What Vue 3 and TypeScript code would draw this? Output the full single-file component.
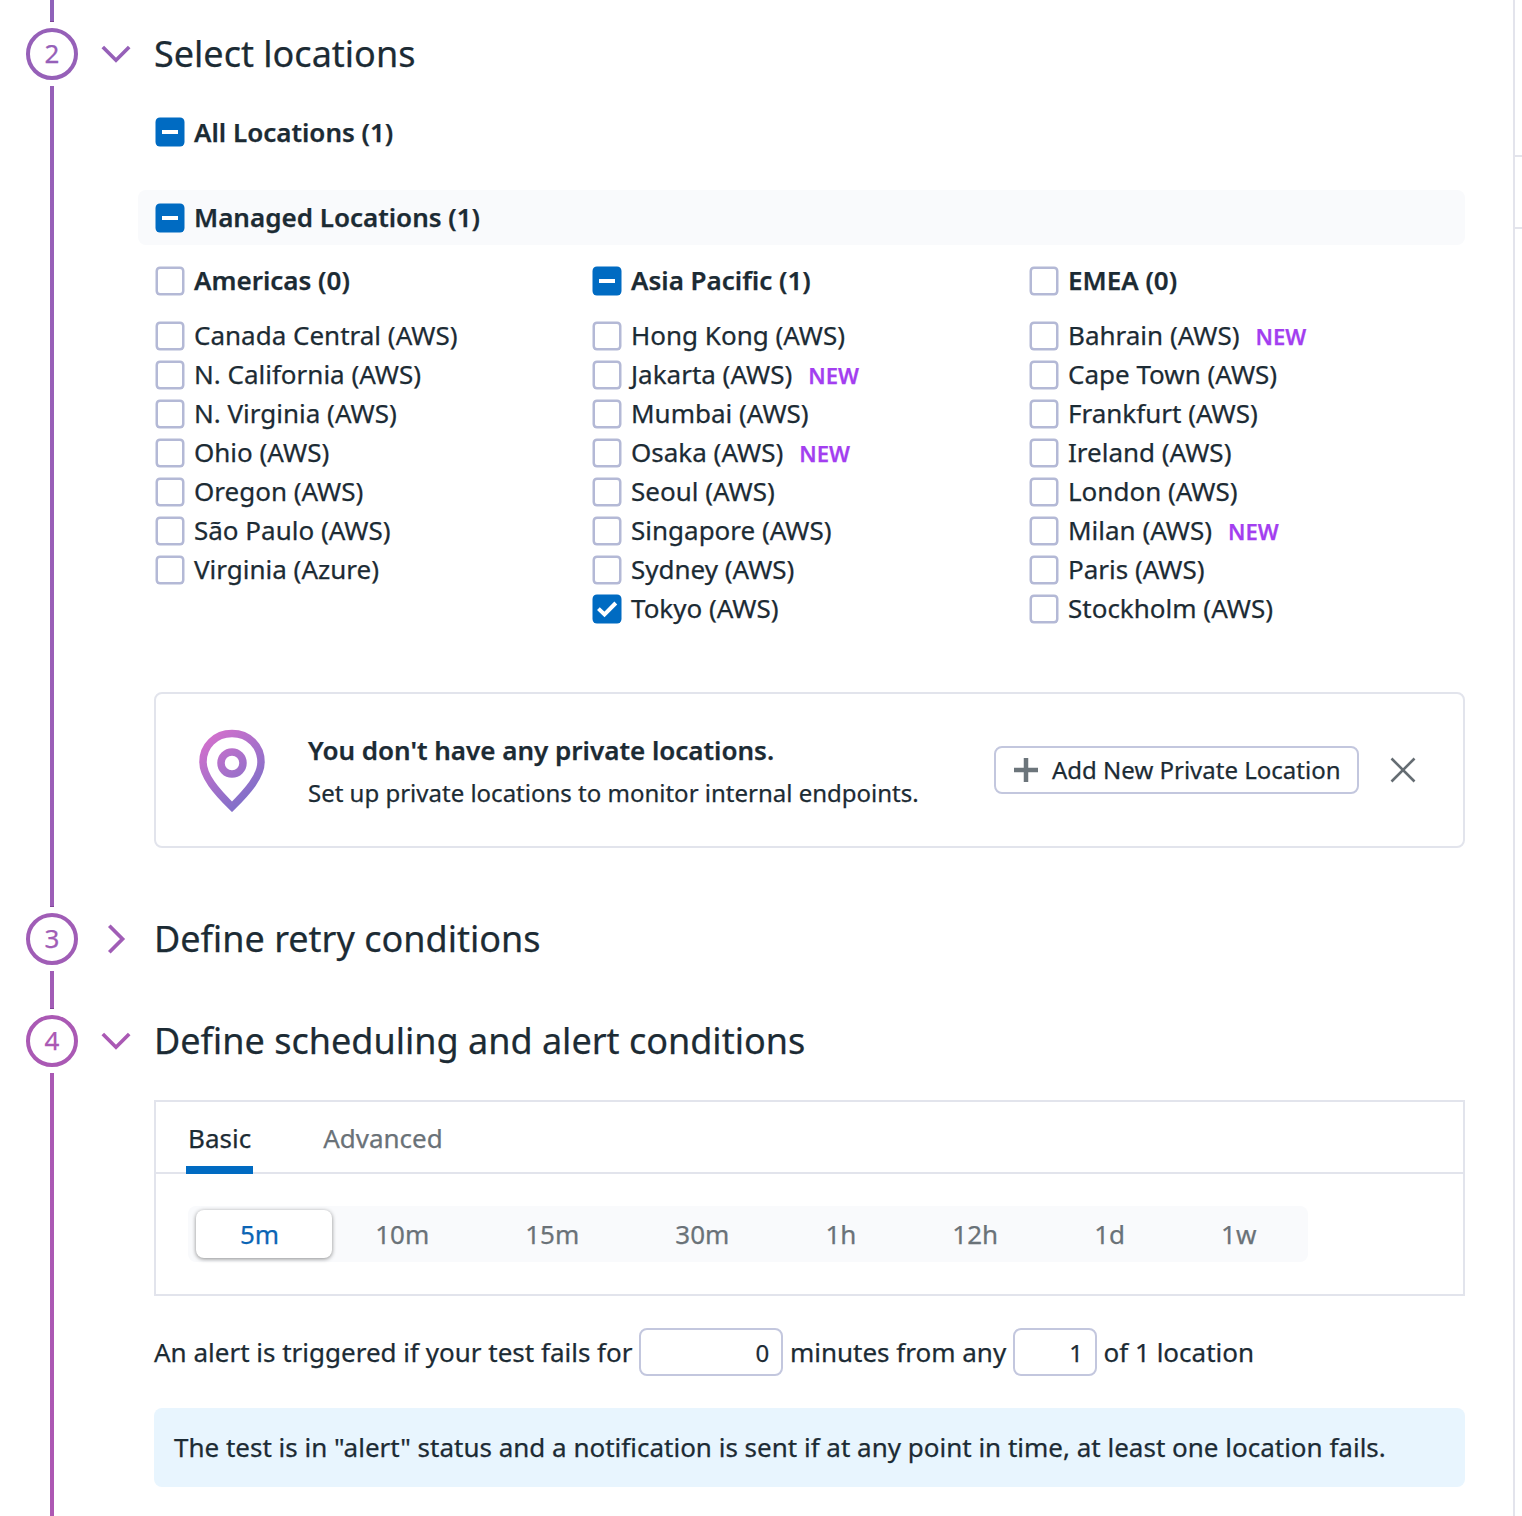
<script setup lang="ts">
type CheckState = 'off' | 'mixed' | 'on'

interface Location {
  name: string
  state?: CheckState
  isNew?: boolean
}

interface Region {
  name: string
  state: CheckState
  locations: Location[]
}

const regions: Region[] = [
  {
    name: 'Americas (0)',
    state: 'off',
    locations: [
      { name: 'Canada Central (AWS)' },
      { name: 'N. California (AWS)' },
      { name: 'N. Virginia (AWS)' },
      { name: 'Ohio (AWS)' },
      { name: 'Oregon (AWS)' },
      { name: 'São Paulo (AWS)' },
      { name: 'Virginia (Azure)' },
    ],
  },
  {
    name: 'Asia Pacific (1)',
    state: 'mixed',
    locations: [
      { name: 'Hong Kong (AWS)' },
      { name: 'Jakarta (AWS)', isNew: true },
      { name: 'Mumbai (AWS)' },
      { name: 'Osaka (AWS)', isNew: true },
      { name: 'Seoul (AWS)' },
      { name: 'Singapore (AWS)' },
      { name: 'Sydney (AWS)' },
      { name: 'Tokyo (AWS)', state: 'on' },
    ],
  },
  {
    name: 'EMEA (0)',
    state: 'off',
    locations: [
      { name: 'Bahrain (AWS)', isNew: true },
      { name: 'Cape Town (AWS)' },
      { name: 'Frankfurt (AWS)' },
      { name: 'Ireland (AWS)' },
      { name: 'London (AWS)' },
      { name: 'Milan (AWS)', isNew: true },
      { name: 'Paris (AWS)' },
      { name: 'Stockholm (AWS)' },
    ],
  },
]

const intervals: string[] = ['5m', '10m', '15m', '30m', '1h', '12h', '1d', '1w']
const selectedInterval = '5m'
</script>

<template>
  <div class="page">
    <main class="main">
      <div class="stub"><span class="line capped"></span></div>

      <section class="step step-2">
        <div class="rail">
          <span class="badge">2</span>
          <span class="line capped"></span>
        </div>
        <div class="toggle">
          <svg width="30" height="30" viewBox="0 0 30 30"><path d="M1.8 8 15 21.2 28.2 8" /></svg>
        </div>
        <div class="body">
          <h2>Select locations</h2>

          <div class="check strong all">
            <span class="box mixed"></span><span>All Locations (1)</span>
          </div>
          <div class="check strong managed">
            <span class="box mixed"></span><span class="label">Managed Locations (1)</span>
          </div>

          <div class="regions">
            <div v-for="region in regions" :key="region.name" class="region">
              <div class="check strong region-head">
                <span class="box" :class="region.state"></span><span class="label">{{ region.name }}</span>
              </div>
              <div v-for="loc in region.locations" :key="loc.name" class="check">
                <span class="box" :class="loc.state ?? 'off'">
                  <svg v-if="loc.state === 'on'" width="28" height="28" viewBox="0 0 28 28">
                    <path d="M5.4 13.600 11.500 19.400 22.800 8" />
                  </svg>
                </span>
                <span class="label">{{ loc.name }}</span>
                <span v-if="loc.isNew" class="new">NEW</span>
              </div>
            </div>
          </div>

          <div class="private">
            <svg class="pin" width="66" height="83" viewBox="0 -0.500 66 83">
              <defs>
                <linearGradient id="pin-fill" gradientUnits="userSpaceOnUse" x1="8" y1="8" x2="54" y2="62">
                  <stop offset="0" stop-color="#d270cc" />
                  <stop offset="1" stop-color="#8470c9" />
                </linearGradient>
              </defs>
              <path d="M33 4.1C16 4.1 4 16.8 4 32.5 4 46.500 17 61.500 33 77.300 49 61.500 62 46.500 62 32.500 62 16.800 50 4.100 33 4.100Z" />
              <circle cx="33" cy="33.500" r="11" />
            </svg>
            <div class="private-text">
              <strong>You don't have any private locations.</strong>
              <span>Set up private locations to monitor internal endpoints.</span>
            </div>
            <button class="add" type="button">
              <svg width="24" height="24" viewBox="0 0 24 24"><path d="M12 0V24M0 12H24" /></svg>
              <span>Add New Private Location</span>
            </button>
            <svg class="close" width="26" height="26" viewBox="0 0 26 26">
              <path d="M1.500 1.500 24.500 24.500M24.500 1.500 1.500 24.500" />
            </svg>
          </div>
        </div>
      </section>

      <section class="step step-3">
        <div class="rail">
          <span class="badge">3</span>
          <span class="line capped"></span>
        </div>
        <div class="toggle">
          <svg width="30" height="30" viewBox="0 0 30 30"><path d="M8.300 1.800 21.500 15 8.300 28.200" /></svg>
        </div>
        <div class="body"><h2>Define retry conditions</h2></div>
      </section>

      <section class="step step-4">
        <div class="rail">
          <span class="badge">4</span>
          <span class="line"></span>
        </div>
        <div class="toggle">
          <svg width="30" height="30" viewBox="0 0 30 30"><path d="M1.800 8 15 21.200 28.200 8" /></svg>
        </div>
        <div class="body">
          <h2>Define scheduling and alert conditions</h2>

          <div class="schedule">
            <div class="tabs">
              <span class="tab active">Basic</span>
              <span class="tab">Advanced</span>
            </div>
            <div class="segments">
              <span
                v-for="value in intervals"
                :key="value"
                class="segment"
                :class="{ selected: value === selectedInterval }"
              ><span>{{ value }}</span></span>
            </div>
          </div>

          <div class="rule">
            <span>An alert is triggered if your test fails for</span>
            <span class="field minutes">0</span>
            <span>minutes from any</span>
            <span class="field count">1</span>
            <span>of 1 location</span>
          </div>

          <div class="info">
            The test is in "alert" status and a notification is sent if at any point in time, at least one location fails.
          </div>
        </div>
      </section>
    </main>
    <aside class="side"><div class="side-block"></div></aside>
  </div>
</template>

<style>
body {
  margin: 0;
  background: #fff;
}
</style>

<style scoped>
* {
  box-sizing: border-box;
}
.page {
  display: flex;
  width: 1522px;
  height: 1516px;
  overflow: hidden;
  font: 400 26px/36px 'Noto Sans', sans-serif;
  -webkit-text-stroke: 0.250px currentColor;
  color: #1c2b34;
  white-space: nowrap;
}
.main {
  display: flex;
  flex-direction: column;
  width: 1513px;
  padding: 0 48px 0 26px;
}
.stub {
  display: flex;
  justify-content: center;
  width: 52px;
  height: 22px;
  --from: #8f62b9;
  --to: #8f62b9;
}
.step {
  display: flex;
}
.step-2 {
  height: 885px;
  --tone: #9660b8;
  --from: #9660b8;
  --to: #9c5eb7;
}
.step-3 {
  height: 102px;
  --tone: #a05db6;
  --from: #a05db6;
  --to: #a35cb6;
}
.step-4 {
  height: 507px;
  --tone: #aa59b4;
  --from: #aa59b4;
  --to: #ad58b3;
}
.rail {
  display: flex;
  flex-direction: column;
  align-items: center;
  gap: 6px;
  width: 52px;
  padding-top: 6px;
}
.badge {
  width: 52px;
  height: 52px;
  flex: none;
  border: 4px solid var(--tone);
  border-radius: 50%;
  color: var(--tone);
  line-height: 42px;
  text-align: center;
}
.line {
  flex: 1;
  width: 4px;
  background: linear-gradient(var(--from), var(--to));
}
.stub .line {
  flex: none;
}
.capped {
  border-bottom: 1px solid #7f4596;
}
.toggle {
  width: 76px;
  padding: 17px 0 0 23px;
}
.toggle svg {
  display: block;
  fill: none;
  stroke: var(--tone);
  stroke-width: 3.700;
}
.body {
  flex: 1;
  min-width: 0;
}
h2 {
  margin: 0;
  font-size: 36px;
  font-weight: 400;
  line-height: 64px;
}
.check {
  display: flex;
  align-items: center;
  height: 39px;
  padding-left: 2px;
}
.label {
  margin-bottom: 2px;
}
.box {
  flex: none;
  width: 28px;
  height: 28px;
  margin-right: 10px;
  border: 2px solid #b4b9d6;
  border-radius: 4px;
  background: #fff;
  box-shadow: 0 0 0 0.500px #b4b9d6;
}
.box.mixed,
.box.on {
  display: flex;
  align-items: center;
  justify-content: center;
  border: 0;
  background: #006bc2;
  box-shadow: 0 0 0 0.500px #006bc2;
}
.box.mixed::before {
  content: '';
  width: 16px;
  height: 4px;
  background: #fff;
}
.box svg {
  fill: none;
  stroke: #fff;
  stroke-width: 4;
}
.strong {
  font-weight: 600;
}
.all {
  margin-top: 26px;
}
.managed {
  height: 55px;
  margin: 39px 0 0 -16px;
  padding-left: 18px;
  border-radius: 8px;
  background: #f9fafc;
}
.regions {
  display: grid;
  grid-template-columns: repeat(3, 1fr);
  margin-top: 16px;
}
.region-head {
  margin-bottom: 16px;
}
.new {
  margin: 1px 0 0 16px;
  font-size: 22px;
  font-weight: 600;
  color: #a33ef0;
}
.private {
  display: flex;
  align-items: center;
  height: 156px;
  margin-top: 64px;
  padding: 0 47px 0 43px;
  border: 2px solid #e2e4ec;
  border-radius: 8px;
}
.pin {
  fill: none;
  stroke: url(#pin-fill);
  stroke-width: 7.500;
}
.private-text {
  display: flex;
  flex-direction: column;
  gap: 7px;
  flex: 1;
  margin: 2px 0 0 43px;
}
.private-text strong {
  font-size: 26px;
  font-weight: 600;
}
.private-text span {
  font-size: 24px;
}
.add {
  display: flex;
  align-items: center;
  gap: 14px;
  width: 365px;
  height: 48px;
  padding: 0 0 0 18px;
  border: 2px solid #c3c7de;
  border-radius: 8px;
  background: #fff;
  color: inherit;
  font: inherit;
  font-size: 24px;
}
.add svg {
  fill: none;
  stroke: #6c757b;
  stroke-width: 4.500;
}
.close {
  margin-left: 31px;
  fill: none;
  stroke: #656d73;
  stroke-width: 2.600;
}
.schedule {
  height: 196px;
  margin-top: 27px;
  border: 2px solid #e2e4ec;
}
.tabs {
  display: flex;
  gap: 68px;
  height: 72px;
  padding-left: 30px;
  border-bottom: 2px solid #e2e4ec;
}
.tab {
  height: 72px;
  padding: 0 2px;
  line-height: 73px;
  color: #6a7278;
}
.tab.active {
  border-bottom: 8px solid #006bc2;
  color: #1c2b34;
}
.segments {
  display: flex;
  width: 1120px;
  height: 56px;
  margin: 32px 0 0 32px;
  padding: 4px;
  border-radius: 8px;
  background: #f9fafc;
}
.segment {
  position: relative;
  padding: 0 48px;
  line-height: 49px;
  color: #6a7278;
}
.segment > span {
  position: relative;
}
.selected {
  color: #0b65b5;
}
.selected::before {
  content: '';
  position: absolute;
  top: 0;
  left: 4px;
  width: 136px;
  height: 48px;
  border-radius: 8px;
  background: #fff;
  box-shadow: 0 1px 4px rgba(0, 0, 0, 0.450);
}
.rule {
  display: flex;
  align-items: center;
  gap: 6.700px;
  height: 48px;
  margin-top: 32px;
}
.field {
  height: 48px;
  border: 2px solid #c3c7de;
  border-radius: 8px;
  padding-right: 12px;
  font-size: 24px;
  line-height: 45px;
  text-align: right;
}
.minutes {
  width: 144px;
}
.count {
  width: 84px;
}
.info {
  height: 79px;
  margin-top: 32px;
  padding-left: 20px;
  border-radius: 8px;
  background: #e8f5fe;
  line-height: 78px;
}
.side {
  width: 9px;
  padding-top: 155px;
  border-left: 2px solid #e3e4ec;
}
.side-block {
  height: 74px;
  border: solid #e3e4ec;
  border-width: 2px 0;
}
</style>
